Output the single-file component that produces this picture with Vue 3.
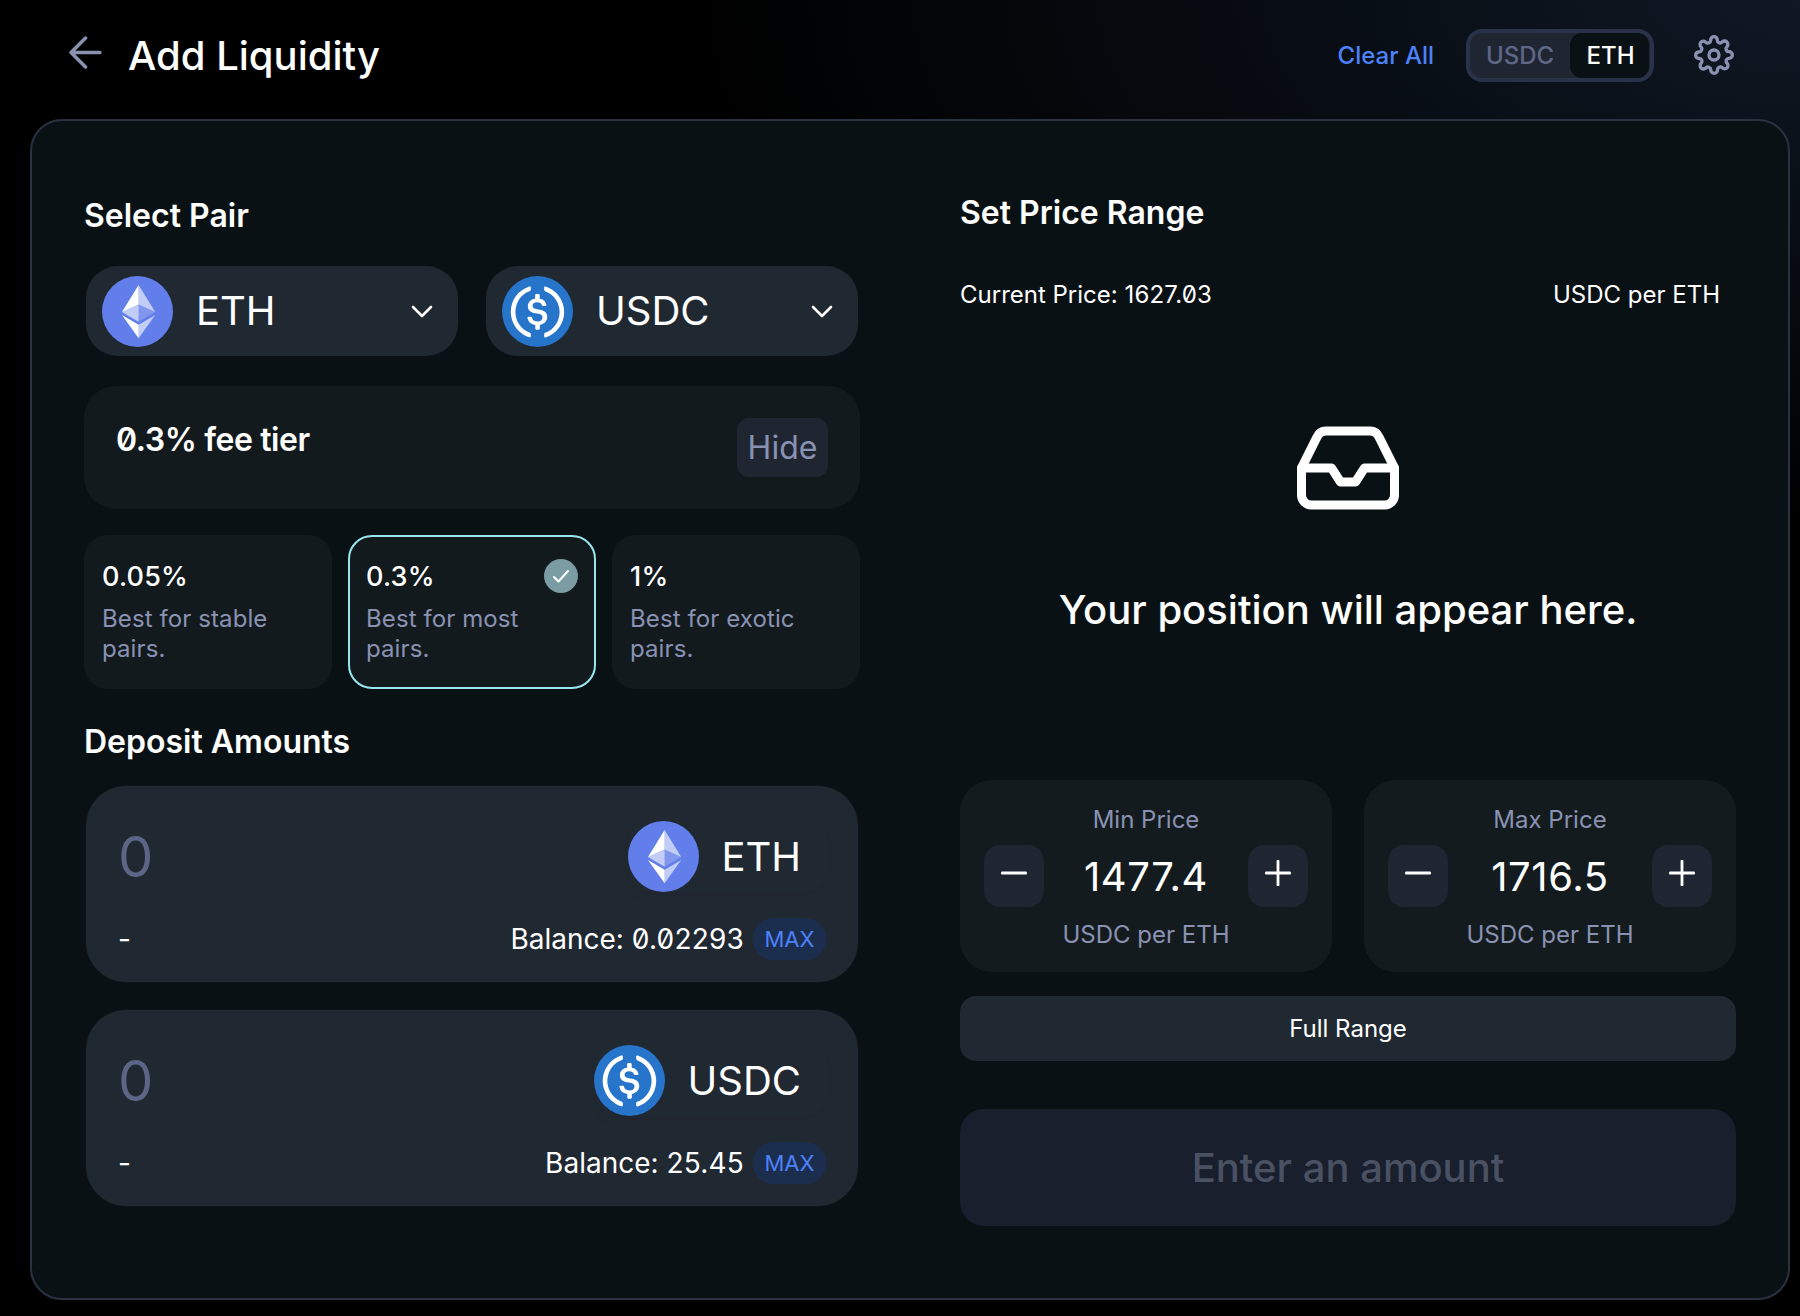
<script setup>
const fees = [
  { pct: "0.05%", desc: "Best for stable pairs." },
  { pct: "0.3%", desc: "Best for most pairs.", active: true },
  { pct: "1%", desc: "Best for exotic pairs." },
];

const pair = ["eth", "usdc"];

const deposits = [
  { token: "eth", label: "ETH", balance: "0.02293" },
  { token: "usdc", label: "USDC", balance: "25.45" },
];

const ranges = [
  { title: "Min Price", value: "1477.4" },
  { title: "Max Price", value: "1716.5" },
];
</script>

<template>
  <div class="page">
    <svg class="defs" width="0" height="0">
      <symbol id="eth" viewBox="0 0 32 32">
        <circle cx="16" cy="16" r="16" fill="#627eea" />
        <g fill="#fff">
          <path fill-opacity=".602" d="M16.5 4v8.87l7.5 3.35z" />
          <path d="M16.5 4L9 16.22l7.5-3.35z" />
          <path fill-opacity=".602" d="M16.5 21.97V28L24 17.62z" />
          <path d="M16.5 28v-6.03L9 17.62z" />
          <path fill-opacity=".2" d="M16.5 20.57l7.5-4.35-7.5-3.35z" />
          <path fill-opacity=".602" d="M9 16.22l7.5 4.35v-7.7z" />
        </g>
      </symbol>
      <symbol id="usdc" viewBox="0 0 2000 2000">
        <circle cx="1000" cy="1000" r="1000" fill="#2775ca" />
        <path fill="#fff" d="M1275 1158.33c0-145.83-87.5-195.83-262.5-216.66-125-16.67-150-50-150-108.34s41.67-95.83 125-95.83c75 0 116.67 25 137.5 87.5 4.17 12.5 16.67 20.83 29.17 20.83h66.66c16.67 0 29.17-12.5 29.17-29.16v-4.17c-16.67-91.67-91.67-162.5-187.5-170.83v-100c0-16.67-12.5-29.17-33.33-33.34h-62.5c-16.67 0-29.17 12.5-33.34 33.34v95.83c-125 16.67-204.16 100-204.16 204.17 0 137.5 83.33 191.66 258.33 212.5 116.67 20.83 154.17 45.83 154.17 112.5s-58.34 112.5-137.5 112.5c-108.34 0-145.84-45.84-158.34-108.34-4.16-16.66-16.66-25-29.16-25h-70.84c-16.66 0-29.16 12.5-29.16 29.17v4.17c16.66 104.16 83.33 179.16 220.83 200v100c0 16.66 12.5 29.16 33.33 33.33h62.5c16.67 0 29.17-12.5 33.34-33.33v-100c125-20.84 208.33-108.34 208.33-220.84z" />
        <path fill="#fff" d="M787.5 1595.83c-325-116.66-491.67-479.16-370.83-800 62.5-175 200-308.33 370.83-370.83 16.67-8.33 25-20.83 25-41.67V325c0-16.67-8.33-29.17-25-33.33-4.17 0-12.5 0-16.67 4.16-395.83 125-612.5 545.84-487.5 941.67 75 233.33 254.17 412.5 487.5 487.5 16.67 8.33 33.34 0 37.5-16.67 4.17-4.16 4.17-8.33 4.17-16.66v-58.34c0-12.5-12.5-29.16-25-37.5zM1229.17 295.83c-16.67-8.33-33.34 0-37.5 16.67-4.17 4.17-4.17 8.33-4.17 16.67v58.33c0 16.67 12.5 33.33 25 41.67 325 116.66 491.67 479.16 370.83 800-62.5 175-200 308.33-370.83 370.83-16.67 8.33-25 20.83-25 41.67V1700c0 16.67 8.33 29.17 25 33.33 4.17 0 12.5 0 16.67-4.16 395.83-125 612.5-545.84 487.5-941.67-75-237.5-258.34-416.67-487.5-491.67z" />
      </symbol>
    </svg>

    <header class="top">
      <svg class="back" viewBox="0 0 32 32" fill="none" stroke="#8a92b2" stroke-width="3.4" stroke-linecap="round" stroke-linejoin="round">
        <path d="M30 16H3M16 2L2 16l14 14" />
      </svg>
      <h1 class="top__title">Add Liquidity</h1>
      <a class="top__clear">Clear All</a>
      <div class="switch">
        <span class="switch__item">USDC</span>
        <span class="switch__item switch__item--on">ETH</span>
      </div>
      <svg class="gear" viewBox="0 0 24 24" fill="none" stroke="#8a92b2" stroke-width="2" stroke-linecap="round" stroke-linejoin="round">
        <circle cx="12" cy="12" r="3" />
        <path d="M19.4 15a1.65 1.65 0 0 0 .33 1.82l.06.06a2 2 0 0 1 0 2.83 2 2 0 0 1-2.83 0l-.06-.06a1.65 1.65 0 0 0-1.82-.33 1.65 1.65 0 0 0-1 1.51V21a2 2 0 0 1-2 2 2 2 0 0 1-2-2v-.09A1.65 1.65 0 0 0 9 19.4a1.65 1.65 0 0 0-1.82.33l-.06.06a2 2 0 0 1-2.83 0 2 2 0 0 1 0-2.83l.06-.06a1.65 1.65 0 0 0 .33-1.82 1.65 1.65 0 0 0-1.51-1H3a2 2 0 0 1-2-2 2 2 0 0 1 2-2h.09A1.65 1.65 0 0 0 4.6 9a1.65 1.65 0 0 0-.33-1.82l-.06-.06a2 2 0 0 1 0-2.83 2 2 0 0 1 2.83 0l.06.06a1.65 1.65 0 0 0 1.82.33H9a1.65 1.65 0 0 0 1-1.51V3a2 2 0 0 1 2-2 2 2 0 0 1 2 2v.09a1.65 1.65 0 0 0 1 1.51 1.65 1.65 0 0 0 1.82-.33l.06-.06a2 2 0 0 1 2.83 0 2 2 0 0 1 0 2.83l-.06.06a1.65 1.65 0 0 0-.33 1.82V9a1.65 1.65 0 0 0 1.51 1H21a2 2 0 0 1 2 2 2 2 0 0 1-2 2h-.09a1.65 1.65 0 0 0-1.51 1z" />
      </svg>
    </header>

    <main class="card">
      <section class="left">
        <h2 class="heading">Select Pair</h2>
        <div class="pair">
          <div v-for="t in pair" :key="t" class="picker">
            <svg class="picker__icon"><use :href="'#' + t" /></svg>
            <span class="picker__name">{{ t.toUpperCase() }}</span>
            <svg class="picker__arrow" viewBox="0 0 24 24" fill="none" stroke="#fff" stroke-width="2.6" stroke-linecap="round" stroke-linejoin="round">
              <path d="M3 8l9 9 9-9" />
            </svg>
          </div>
        </div>

        <div class="tier">
          <span class="tier__text slashed">0.3% fee tier</span>
          <span class="tier__hide">Hide</span>
        </div>

        <div class="fees">
          <div v-for="f in fees" :key="f.pct" class="fee" :class="{ 'fee--on': f.active }">
            <div class="fee__pct">{{ f.pct }}</div>
            <div class="fee__desc">{{ f.desc }}</div>
            <span v-if="f.active" class="fee__check">
              <svg viewBox="0 0 24 24" fill="none" stroke="#fff" stroke-width="2" stroke-linecap="round" stroke-linejoin="round">
                <path d="M5 13l4.5 4.5L19 7" />
              </svg>
            </span>
          </div>
        </div>

        <h2 class="heading heading--deposit">Deposit Amounts</h2>
        <div v-for="d in deposits" :key="d.token" class="deposit">
          <div class="deposit__row">
            <span class="deposit__zero">0</span>
            <div class="token">
              <svg class="token__icon"><use :href="'#' + d.token" /></svg>
              <span class="token__name">{{ d.label }}</span>
            </div>
          </div>
          <div class="deposit__row deposit__row--low">
            <span class="deposit__dash">-</span>
            <div class="deposit__balance">
              <span>Balance: <span class="slashed">{{ d.balance }}</span></span>
              <span class="max">MAX</span>
            </div>
          </div>
        </div>
      </section>

      <section class="right">
        <h2 class="heading heading--range">Set Price Range</h2>
        <div class="current">
          <span>Current Price: <span class="slashed">1627.03</span></span>
          <span>USDC per ETH</span>
        </div>

        <div class="empty">
          <svg class="empty__icon" viewBox="0 0 102 84" fill="none" stroke="#fff" stroke-width="9" stroke-linecap="round" stroke-linejoin="round">
            <path d="M97.5 42H67.5L58.5 56H43.5L34.5 42H4.5" />
            <path d="M20 11L4.5 42V69a10 10 0 0 0 10 10H87.5a10 10 0 0 0 10-10V42L82 11a10 10 0 0 0-9-6H29a10 10 0 0 0-9 6z" />
          </svg>
          <p class="empty__text">Your position will appear here.</p>
        </div>

        <div class="ranges">
          <div v-for="r in ranges" :key="r.title" class="range">
            <div class="range__label">{{ r.title }}</div>
            <div class="range__row">
              <span class="step">
                <svg viewBox="0 0 24 24" fill="none" stroke="#fff" stroke-width="2.6" stroke-linecap="round"><path d="M1 12h22" /></svg>
              </span>
              <span class="range__value">{{ r.value }}</span>
              <span class="step">
                <svg viewBox="0 0 24 24" fill="none" stroke="#fff" stroke-width="2.6" stroke-linecap="round"><path d="M1 12h22M12 1v22" /></svg>
              </span>
            </div>
            <div class="range__label range__label--unit">USDC per ETH</div>
          </div>
        </div>

        <button class="full">Full Range</button>
        <button class="submit">Enter an amount</button>
      </section>
    </main>
  </div>
</template>

<style>
html,
body {
  margin: 0;
  background: #000;
}
</style>

<style scoped>
* {
  box-sizing: border-box;
}
.page {
  width: 1800px;
  height: 1316px;
  overflow: hidden;
  padding: 0 10px 0 30px;
  font-family: Inter, "Noto Sans", sans-serif;
  color: #fff;
  background:
    radial-gradient(ellipse 1100px 520px at 100% 0, #0f1824 0%, rgba(15, 24, 36, 0) 100%),
    #000;
}
.defs {
  position: absolute;
}
.slashed {
  font-feature-settings: "zero";
  letter-spacing: 0.2px;
}

.top {
  height: 119px;
  display: flex;
  align-items: center;
  padding: 0 56px 9px 39px;
}
.back {
  width: 33px;
  height: 33px;
  margin-right: 26px;
  margin-top: -6px;
}
.top__title {
  margin: 2px auto 0 0;
  font-size: 40px;
  font-weight: 500;
  line-height: 48px;
}
.top__clear {
  font-size: 24px;
  font-weight: 500;
  color: #4c82fb;
  margin-right: 32px;
}
.switch {
  width: 188px;
  height: 53px;
  display: flex;
  justify-content: space-between;
  align-items: center;
  padding-left: 16px;
  padding-right: 1px;
  border: 4px solid #293249;
  border-radius: 16px;
  background: #1f2632;
  font-size: 24px;
  font-weight: 500;
  margin-right: 40px;
}
.switch__item {
  color: #5e6787;
}
.switch__item--on {
  width: 79px;
  height: 45px;
  display: flex;
  align-items: center;
  justify-content: center;
  padding-left: 2px;
  border-radius: 12px;
  background: #0a1114;
  color: #fff;
}
.gear {
  width: 40px;
  height: 40px;
}

.card {
  width: 1760px;
  height: 1181px;
  display: grid;
  grid-template-columns: 776px 776px;
  column-gap: 100px;
  padding: 0 52px 0 52px;
  border: 2px solid #2a3140;
  border-radius: 32px;
  background: #0a1114;
}

.heading {
  margin: 0;
  font-size: 32px;
  font-weight: 600;
  line-height: 40px;
}
.left {
  padding-top: 75px;
}
.pair {
  display: flex;
  gap: 28px;
  margin: 30px 2px 30px;
}
.picker {
  width: 372px;
  height: 90px;
  display: flex;
  align-items: center;
  padding: 0 24px 0 16px;
  border-radius: 32px;
  background: #202832;
}
.picker__icon {
  width: 71px;
  height: 71px;
}
.picker__name {
  font-size: 40px;
  margin-left: 23px;
  margin-top: -2px;
  margin-right: auto;
}
.picker__arrow {
  width: 24px;
  height: 24px;
}

.tier {
  height: 123px;
  display: flex;
  align-items: flex-start;
  justify-content: space-between;
  padding: 32px 32px 0 32px;
  border-radius: 32px;
  background: #131a1e;
}
.tier__text {
  font-size: 32px;
  font-weight: 600;
  letter-spacing: -0.4px;
  line-height: 40px;
  margin-top: 2px;
}
.tier__hide {
  width: 91px;
  height: 59px;
  display: flex;
  align-items: center;
  justify-content: center;
  border-radius: 12px;
  background: #1f2632;
  color: #8a92b2;
  font-size: 32px;
}

.fees {
  display: grid;
  grid-template-columns: repeat(3, 1fr);
  gap: 16px;
  margin-top: 26px;
}
.fee {
  position: relative;
  height: 154px;
  padding: 22px 16px 0;
  border: 2px solid transparent;
  border-radius: 24px;
  background: #131a1e;
}
.fee--on {
  border-color: #98e8f0;
}
.fee__pct {
  font-size: 27px;
  font-weight: 500;
  letter-spacing: 0.2px;
  line-height: 36px;
}
.fee__desc {
  margin-top: 9px;
  font-size: 24px;
  letter-spacing: 0.1px;
  line-height: 30px;
  color: #8a92b2;
}
.fee__check {
  position: absolute;
  top: 22px;
  right: 16px;
  width: 34px;
  height: 34px;
  display: flex;
  align-items: center;
  justify-content: center;
  border-radius: 50%;
  background: #7a9ca2;
}
.fee__check svg {
  width: 24px;
  height: 24px;
}

.heading--deposit {
  margin-top: 33px;
  margin-bottom: 24px;
}
.deposit {
  height: 196px;
  margin: 0 2px 28px;
  padding: 34px 32px 0;
  border-radius: 40px;
  background: #202832;
  box-shadow: 0 0 0 1px #0e151a;
}
.deposit__row {
  display: flex;
  align-items: center;
  justify-content: space-between;
  height: 72px;
}
.deposit__row--low {
  height: 42px;
  margin-top: 26px;
}
.deposit__zero {
  font-size: 56px;
  color: #5c6585;
  line-height: 72px;
  padding-top: 2px;
}
.deposit__dash,
.deposit__balance {
  font-size: 28px;
}
.deposit__balance {
  display: flex;
  align-items: center;
  gap: 9px;
}
.token {
  display: flex;
  align-items: center;
  gap: 22px;
  height: 72px;
  padding-right: 26px;
  margin-right: -1px;
  border-radius: 24px;
  box-shadow: 0 6px 10px rgba(0, 0, 0, 0.04);
}
.token__icon {
  width: 71px;
  height: 71px;
}
.token__name {
  font-size: 40px;
}
.max {
  width: 73px;
  height: 42px;
  display: flex;
  align-items: center;
  justify-content: center;
  border-radius: 20px;
  background: #1c2e4e;
  color: #4c82fb;
  font-size: 22px;
}

.heading--range {
  margin-top: 72px;
}
.current {
  display: flex;
  justify-content: space-between;
  margin-top: 47px;
  padding-right: 16px;
  font-size: 24px;
  line-height: 30px;
}
.empty {
  height: 470px;
  display: flex;
  flex-direction: column;
  align-items: center;
  padding-top: 116px;
}
.empty__icon {
  width: 102px;
  height: 84px;
}
.empty__text {
  margin: 76px 0 0;
  font-size: 40px;
  font-weight: 500;
  line-height: 48px;
}

.ranges {
  display: grid;
  grid-template-columns: 1fr 1fr;
  gap: 32px;
}
.range {
  height: 192px;
  padding: 25px 24px 0;
  border-radius: 32px;
  background: #141b1f;
  text-align: center;
}
.range__label {
  font-size: 24px;
  line-height: 30px;
  color: #8a92b2;
}
.range__row {
  display: flex;
  align-items: center;
  justify-content: space-between;
  margin-top: 10px;
}
.range__value {
  font-size: 40px;
  font-weight: 400;
  letter-spacing: 0.6px;
  line-height: 48px;
  padding-top: 2px;
}
.range__label--unit {
  margin-top: 13px;
}
.step {
  width: 60px;
  height: 62px;
  display: flex;
  align-items: flex-start;
  justify-content: center;
  padding-top: 15px;
  border-radius: 16px;
  background: #1f2632;
}
.step svg {
  width: 26px;
  height: 26px;
}

button {
  display: block;
  width: 100%;
  border: none;
  font-family: inherit;
}
.full {
  height: 65px;
  margin-top: 24px;
  border-radius: 16px;
  background: #202832;
  color: #fff;
  font-size: 24px;
  font-weight: 400;
}
.submit {
  height: 117px;
  margin-top: 48px;
  border-radius: 24px;
  background: #191f2d;
  color: #4a5162;
  font-size: 40px;
  font-weight: 500;
}
</style>
